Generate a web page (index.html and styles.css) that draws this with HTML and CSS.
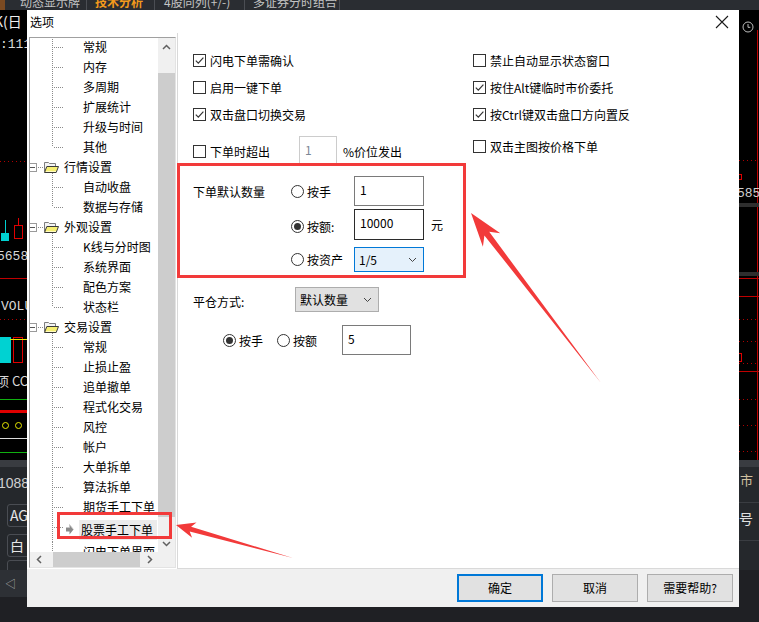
FILE: index.html
```html
<!DOCTYPE html>
<html lang="zh-CN">
<head>
<meta charset="utf-8">
<title>选项</title>
<link rel="stylesheet" href="styles.css">
</head>
<body>
<div class="screen">
  <div class="tabbar">
    <span class="tab stub"></span>
    <span class="tab t1">动态显示牌</span>
    <span class="tab t2 active">技术分析</span>
    <span class="tab t3">4股同列(+/-)</span>
    <span class="tab t4">多证券分时组合</span>
  </div>

  <div class="chart-l">
    <span class="ct k-lbl">K(日</span>
    <span class="ct n111">:111</span>
    <i class="dot-red" style="top:151px"></i>
    <i class="wick cy" style="left:5px;top:210px;height:14px"></i>
    <i class="cbody cyan" style="left:1px;top:223px;width:8px;height:8px"></i>
    <i class="wick rd" style="left:18px;top:208px;height:8px"></i>
    <i class="cbody hollow" style="left:14px;top:215px;width:9px;height:14px"></i>
    <span class="ct n5658">5658</span>
    <i class="line-red" style="top:268px"></i>
    <span class="ct volu">VOLU</span>
    <i class="dot-red" style="top:309px"></i>
    <i class="cbody cyan" style="left:0;top:327px;width:11px;height:26px"></i>
    <i class="cbody hollow" style="left:13px;top:327px;width:10px;height:26px"></i>
    <i class="line-yel" style="top:329px"></i>
    <span class="ct cc">项 CC</span>
    <i class="line-grn" style="top:389px"></i>
    <i class="line-red thick" style="top:400px"></i>
    <i class="ring" style="left:2px;top:412px"></i>
    <i class="ring" style="left:15px;top:412px"></i>
    <i class="line-wht" style="top:428px"></i>
    <i class="line-grn" style="top:442px"></i>
  </div>

  <div class="band"></div>

  <div class="lower-l">
    <span class="ct n10889">10889</span>
    <span class="pill" style="top:37px">AG</span>
    <span class="pill" style="top:67px">白</span>
    <span class="pill" style="top:93px"></span>
  </div>
  <div class="foot-l"><span class="tri">◁</span></div>

  <div class="chart-r">
    <svg class="clock" width="12" height="12" viewBox="0 0 12 12"><circle cx="6" cy="6" r="5" fill="none" stroke="#bdbdbd" stroke-width="1"/><path d="M6 3v3.3h2.3" fill="none" stroke="#bdbdbd" stroke-width="1"/></svg>
    <i class="vred"></i>
    <i class="dot-red r" style="top:150px"></i>
    <i class="mark-r" style="top:164px"></i>
    <span class="ct n585">585</span>
    <i class="gband" style="top:193px"></i>
    <i class="gband" style="top:262px"></i>
    <i class="line-red r" style="top:268px"></i>
    <i class="line-red r" style="top:286px"></i>
    <i class="dot-red r" style="top:309px"></i>
    <i class="dot-red r" style="top:331px"></i>
    <i class="mark-r" style="top:343px;height:9px"></i>
    <i class="dot-red r" style="top:353px"></i>
    <i class="line-red r" style="top:361px"></i>
    <i class="dot-red r" style="top:389px"></i>
    <i class="dot-red r" style="top:415px"></i>
    <i class="dot-red r" style="top:441px"></i>
  </div>
  <div class="lower-r">
    <span class="ct shi">市</span>
    <i class="sep" style="top:35px"></i>
    <span class="ct hao">号</span>
    <i class="sep" style="top:73px"></i>
  </div>

  <div class="dialog">
    <div class="titlebar">
      <span class="title">选项</span>
      <svg class="close" width="14" height="14" viewBox="0 0 14 14"><path d="M1 1L13 13M13 1L1 13" stroke="#1a1a1a" stroke-width="1.1"/></svg>
    </div>
    <div class="body">
      <div class="nav">
        <div class="tree">
          <div class="items">
            <div class="list">
              <div class="node child">常规</div>
              <div class="node child">内存</div>
              <div class="node child">多周期</div>
              <div class="node child">扩展统计</div>
              <div class="node child">升级与时间</div>
              <div class="node child last">其他</div>
              <div class="node parent"><span class="minus"></span><span class="hdots"></span><svg class="folder" width="16" height="14" viewBox="0 0 16 14"><path d="M1.5 11.5V2.5h4l1 1h6v3" fill="#f4f4f4" stroke="#7c7c7c"/><path d="M1.5 12.5L3.8 6.5H15.5L13.2 12.5Z" fill="#f6ef72" stroke="#3a3a3a"/><path d="M3 11.5h10" stroke="#fffbc0"/></svg><span class="ptext">行情设置</span></div>
              <div class="node child">自动收盘</div>
              <div class="node child last">数据与存储</div>
              <div class="node parent"><span class="minus"></span><span class="hdots"></span><svg class="folder" width="16" height="14" viewBox="0 0 16 14"><path d="M1.5 11.5V2.5h4l1 1h6v3" fill="#f4f4f4" stroke="#7c7c7c"/><path d="M1.5 12.5L3.8 6.5H15.5L13.2 12.5Z" fill="#f6ef72" stroke="#3a3a3a"/><path d="M3 11.5h10" stroke="#fffbc0"/></svg><span class="ptext">外观设置</span></div>
              <div class="node child">K线与分时图</div>
              <div class="node child">系统界面</div>
              <div class="node child">配色方案</div>
              <div class="node child last">状态栏</div>
              <div class="node parent"><span class="minus"></span><span class="hdots"></span><svg class="folder" width="16" height="14" viewBox="0 0 16 14"><path d="M1.5 11.5V2.5h4l1 1h6v3" fill="#f4f4f4" stroke="#7c7c7c"/><path d="M1.5 12.5L3.8 6.5H15.5L13.2 12.5Z" fill="#f6ef72" stroke="#3a3a3a"/><path d="M3 11.5h10" stroke="#fffbc0"/></svg><span class="ptext">交易设置</span></div>
              <div class="node child">常规</div>
              <div class="node child">止损止盈</div>
              <div class="node child">追单撤单</div>
              <div class="node child">程式化交易</div>
              <div class="node child">风控</div>
              <div class="node child">帐户</div>
              <div class="node child">大单拆单</div>
              <div class="node child">算法拆单</div>
              <div class="node child">期货手工下单</div>
              <div class="node child sel"><svg class="selarrow" width="8" height="11" viewBox="0 0 8 11"><path d="M0 3.5H3.5V0.5L7.5 5.5L3.5 10.5V7.5H0Z" fill="#8a8a8a"/><path d="M0 3.5H3.5V0.5L7.5 5.5" fill="none" stroke="#c8c8c8" stroke-width="0.8"/></svg><span class="seltext">股票手工下单</span></div>
              <div class="node child">闪电下单界面</div>
            </div>
          </div>
          <div class="vscroll">
            <span class="sbtn"><svg width="9" height="6" viewBox="0 0 9 6"><path d="M1 5L4.5 1.5L8 5" fill="none" stroke="#606060" stroke-width="1.5"/></svg></span>
            <span class="vtrack"><span class="vthumb"></span></span>
            <span class="sbtn"><svg width="9" height="6" viewBox="0 0 9 6"><path d="M1 1L4.5 4.5L8 1" fill="none" stroke="#606060" stroke-width="1.5"/></svg></span>
          </div>
          <div class="hscroll">
            <span class="sbtn h"><svg width="6" height="9" viewBox="0 0 6 9"><path d="M5 1L1.5 4.5L5 8" fill="none" stroke="#606060" stroke-width="1.5"/></svg></span>
            <span class="htrack"><span class="hthumb"></span></span>
            <span class="sbtn h"><svg width="6" height="9" viewBox="0 0 6 9"><path d="M1 1L4.5 4.5L1 8" fill="none" stroke="#606060" stroke-width="1.5"/></svg></span>
          </div>
          <div class="corner"></div>
        </div>
      </div>

      <div class="panel">
        <div class="opts">
          <label class="chk"><span class="box"><svg width="11" height="11" viewBox="0 0 11 11"><path d="M1.8 5.6L4.3 8.1L9.4 2.6" fill="none" stroke="#333" stroke-width="1.2"/></svg></span>闪电下单需确认</label>
          <label class="chk"><span class="box"></span>禁止自动显示状态窗口</label>
          <label class="chk"><span class="box"></span>启用一键下单</label>
          <label class="chk"><span class="box"><svg width="11" height="11" viewBox="0 0 11 11"><path d="M1.8 5.6L4.3 8.1L9.4 2.6" fill="none" stroke="#333" stroke-width="1.2"/></svg></span>按住Alt键临时市价委托</label>
          <label class="chk"><span class="box"><svg width="11" height="11" viewBox="0 0 11 11"><path d="M1.8 5.6L4.3 8.1L9.4 2.6" fill="none" stroke="#333" stroke-width="1.2"/></svg></span>双击盘口切换交易</label>
          <label class="chk"><span class="box"><svg width="11" height="11" viewBox="0 0 11 11"><path d="M1.8 5.6L4.3 8.1L9.4 2.6" fill="none" stroke="#333" stroke-width="1.2"/></svg></span>按Ctrl键双击盘口方向置反</label>
        </div>
        <div class="row4">
          <div class="over">
            <label class="chk"><span class="box"></span>下单时超出</label>
            <span class="field dis">1</span>
            <span class="pct">%价位发出</span>
          </div>
          <label class="chk top"><span class="box"></span>双击主图按价格下单</label>
        </div>

        <div class="qty">
          <span class="qlabel">下单默认数量</span>
          <label class="rcell r1"><span class="rad"></span>按手</label>
          <span class="field fa">1</span>
          <label class="rcell r2"><span class="rad on"></span>按额:</label>
          <span class="field fb">10000</span>
          <span class="unit">元</span>
          <label class="rcell r3"><span class="rad"></span>按资产</label>
          <span class="sel sel-blue">1/5<svg width="9" height="6" viewBox="0 0 9 6"><path d="M1 1L4.5 4.5L8 1" fill="none" stroke="#444" stroke-width="1"/></svg></span>
        </div>

        <div class="close-mode">
          <span class="cm-label">平仓方式:</span>
          <span class="sel sel-grey">默认数量<svg width="9" height="6" viewBox="0 0 9 6"><path d="M1 1L4.5 4.5L8 1" fill="none" stroke="#444" stroke-width="1"/></svg></span>
        </div>

        <div class="cm-radios">
          <label class="rl"><span class="rad on"></span>按手</label>
          <label class="rl second"><span class="rad"></span>按额</label>
          <span class="field fc">5</span>
        </div>
      </div>
    </div>
    <div class="footer">
      <span class="btn default">确定</span>
      <span class="btn">取消</span>
      <span class="btn">需要帮助?</span>
    </div>
  </div>

  <svg class="annot" width="759" height="622" viewBox="0 0 759 622">
    <rect x="178.5" y="164.5" width="286" height="112" fill="none" stroke="#f23a3a" stroke-width="3"/>
    <rect x="58.5" y="513.5" width="112" height="24" fill="none" stroke="#f23a3a" stroke-width="3"/>
    <polygon points="601,383 489.2,231.8 500.3,233.3 471,213 482.9,246.7 484.4,235.4" fill="#f23a3a"/>
    <polygon points="293,558 191.1,526.7 196.5,522.4 176,525 192.1,537.8 189.7,531.5" fill="#f23a3a"/>
  </svg>
</div>
</body>
</html>
```

FILE: styles.css
```css
* { box-sizing: border-box; }
html, body { margin: 0; padding: 0; }
body {
  background: #1f2024;
  font-family: "Noto Sans CJK SC", "Noto Sans", sans-serif;
  font-size: 12px;
  color: #000;
  overflow: hidden;
}
.screen {
  position: relative;
  width: 759px;
  height: 622px;
  overflow: hidden;
  background: #1f2024;
}

/* ---------- background application ---------- */
.tabbar {
  position: absolute; left: 0; top: 0;
  width: 759px; height: 10px;
  background: #2a2d32;
  display: flex;
  overflow: hidden;
  color: #c4c4c4;
}
.tab {
  line-height: 12px;
  margin-top: -4px;
  height: 20px;
  white-space: nowrap;
  border-right: 1px solid #4b4e54;
}
.stub { width: 5px; background: #7a4a22; border: none; }
.t1 { width: 82px; padding-left: 15px; }
.t2 { width: 68px; padding-left: 8px; }
.t3 { width: 90px; padding-left: 9px; }
.t4 { width: 95px; padding-left: 8px; }
.active { color: #f39a1c; font-weight: bold; }

.chart-l {
  position: absolute; left: 0; top: 10px;
  width: 27px; height: 450px;
  background: #000;
  overflow: hidden;
}
.chart-l i, .chart-r i, .lower-r i { position: absolute; display: block; }
.ct {
  position: absolute;
  font-family: "Liberation Mono", monospace;
  font-size: 13px;
  line-height: 14px;
  color: #d8d8d8;
  white-space: nowrap;
}
.k-lbl { left: -6px; top: 3px; font-family: "Noto Sans CJK SC", sans-serif; font-size: 14px; line-height: 16px; color: #eee; }
.n111 { left: 0; top: 28px; }
.n5658 { left: -3px; top: 240px; }
.volu { left: 1px; top: 290px; }
.cc { left: -4px; top: 364px; font-family: "Noto Sans CJK SC", sans-serif; }
.dot-red {
  left: 0; width: 27px; height: 1px;
  background: repeating-linear-gradient(to right, #b00000 0 1px, transparent 1px 4px);
}
.line-red { left: 0; width: 27px; height: 1px; background: #c00000; }
.line-red.thick { height: 3px; background: #e00000; }
.line-grn { left: 0; width: 27px; height: 1px; background: #10b010; }
.line-wht { left: 0; width: 27px; height: 1px; background: #dcdcdc; }
.line-yel { left: 10px; width: 17px; height: 1px; background: #e8e800; }
.wick { width: 1px; }
.wick.cy { background: #00d0d0; }
.wick.rd { background: #e00000; }
.cbody.cyan { background: #00d2d2; }
.cbody.hollow { border: 1px solid #e00000; }
.ring { width: 7px; height: 7px; border: 1px solid #e8e800; border-radius: 50%; }

.band {
  position: absolute; left: 0; top: 460px;
  width: 759px; height: 7px;
  background: #393c41;
}
.lower-l {
  position: absolute; left: 0; top: 467px;
  width: 27px; height: 103px;
  background: #25282c;
  overflow: hidden;
}
.n10889 { left: -2px; top: 9px; font-family: "Liberation Sans", sans-serif; font-size: 14px; color: #cfcfcf; }
.pill {
  position: absolute; left: 7px;
  width: 40px; height: 23px;
  border: 1px solid #4a4d53;
  border-radius: 3px;
  color: #e6e6e6;
  font-size: 14px;
  line-height: 21px;
  padding-left: 2px;
  white-space: nowrap;
}
.foot-l {
  position: absolute; left: 0; top: 570px;
  width: 27px; height: 27px;
  background: #2d3035;
  color: #a8a8a8;
}
.tri { position: absolute; left: 5px; top: 6px; font-size: 11px; line-height: 14px; }

.chart-r {
  position: absolute; left: 739px; top: 10px;
  width: 20px; height: 450px;
  background: #000;
  overflow: hidden;
}
.clock { position: absolute; left: 3px; top: 11px; }
.vred { left: 18px; top: 20px; width: 1px; height: 430px; background: #c00000; }
.dot-red.r, .line-red.r { width: 20px; }
.mark-r { left: 0; width: 3px; height: 6px; border: 1px solid #e00000; border-left: none; }
.n585 { left: -2px; top: 177px; color: #cfcfcf; }
.gband { left: 0; width: 20px; height: 4px; background: #2e2e2e; }
.lower-r {
  position: absolute; left: 739px; top: 467px;
  width: 20px; height: 103px;
  background: #25282c;
  overflow: hidden;
}
.shi { left: 1px; top: 6px; font-family: "Noto Sans CJK SC", sans-serif; color: #d0c0a0; }
.hao { left: 0; top: 44px; font-family: "Noto Sans CJK SC", sans-serif; font-size: 14px; color: #e0e0e0; }
.sep { left: 0; width: 20px; height: 1px; background: #3a3d42; }

/* ---------- dialog ---------- */
.dialog {
  position: absolute; left: 27px; top: 10px;
  width: 712px; height: 597px;
  background: #fff;
  display: flex;
  flex-direction: column;
}
.titlebar {
  height: 23px;
  flex: none;
  display: flex;
  align-items: center;
  padding-left: 3px;
}
.title { line-height: 16px; }
.close { margin-left: auto; margin-right: 10px; display: block; }

.body { flex: 1; display: flex; min-height: 0; }

.nav { width: 150px; flex: none; padding: 4px 1px 0 2px; }
.tree {
  height: 531px;
  border: 1px solid;
  border-color: #a0a0a0 #e3e3e3 #e3e3e3 #a0a0a0;
  display: grid;
  grid-template-columns: 128px 17px;
  grid-template-rows: 514px 15px;
  background: #fff;
}
.items { overflow: hidden; position: relative; }
.list { margin-top: -1px; }
.node {
  height: 20px;
  position: relative;
  display: flex;
  align-items: center;
  white-space: nowrap;
  line-height: 16px;
}
.child { padding-left: 53px; }
.child::before {
  content: "";
  position: absolute;
  left: 22px; top: 0; bottom: 0;
  width: 1px;
  background: repeating-linear-gradient(to bottom, #8a8a8a 0 1px, transparent 1px 2px);
}
.child.last::before { bottom: 10px; }
.child::after {
  content: "";
  position: absolute;
  left: 24px; top: 10px;
  width: 9px; height: 1px;
  background: repeating-linear-gradient(to right, #8a8a8a 0 1px, transparent 1px 2px);
}
.parent::before {
  content: "";
  position: absolute;
  left: 22px; top: 16px; bottom: 0;
  width: 1px;
  background: repeating-linear-gradient(to bottom, #8a8a8a 0 1px, transparent 1px 2px);
}
.minus {
  width: 9px; height: 9px;
  margin-left: -2px;
  border: 1px solid #9a9a9a;
  background: #fff;
  position: relative;
  flex: none;
}
.minus::after {
  content: "";
  position: absolute;
  left: 1px; top: 3px;
  width: 5px; height: 1px;
  background: #555;
}
.hdots {
  width: 6px; height: 1px;
  flex: none;
  background: repeating-linear-gradient(to right, transparent 0 1px, #8a8a8a 1px 2px);
}
.folder { display: block; flex: none; }
.ptext { margin-left: 5px; }
.child.sel { padding-left: 36px; }
.selarrow { display: block; flex: none; margin-right: 7px; position: relative; z-index: 1; }
.seltext { margin-left: -2px; padding: 0 4px 0 2px; height: 20px; line-height: 20px; background: #ebebeb; }

.vscroll {
  background: #f0f0f0;
  display: flex;
  flex-direction: column;
}
.sbtn {
  width: 17px; height: 17px;
  flex: none;
  display: flex;
  align-items: center;
  justify-content: center;
}
.sbtn.h { height: 15px; }
.sbtn svg { display: block; }
.vtrack { flex: 1; }
.vthumb { display: block; margin-top: 18px; height: 444px; background: #cdcdcd; }
.hscroll {
  background: #f0f0f0;
  display: flex;
}
.htrack { flex: 1; display: flex; align-items: stretch; }
.hthumb { display: block; margin-left: 6px; width: 87px; background: #cdcdcd; }
.corner { background: #f0f0f0; }

.panel {
  flex: 1;
  border-left: 1px solid #d9d9d9;
  border-bottom: 1px solid #d9d9d9;
  padding: 14px 0 0 15px;
}
.opts {
  display: grid;
  grid-template-columns: 280px 1fr;
  grid-template-rows: 27px 27px 27px;
}
.chk {
  display: flex;
  align-items: center;
  gap: 4px;
  line-height: 17px;
  white-space: nowrap;
}
.box {
  width: 13px; height: 13px;
  border: 1px solid #333;
  background: #fff;
  flex: none;
  display: block;
}
.box svg { display: block; }
.row4 {
  display: grid;
  grid-template-columns: 280px 1fr;
  margin-top: 8px;
}
.over { display: flex; align-items: center; height: 30px; }
.chk.top { align-self: start; padding-top: 2px; }
.field {
  display: block;
  background: #fff;
  border: 1px solid #7a7a7a;
  padding: 4px 0 0 5px;
  line-height: 17px;
  white-space: nowrap;
}
.field.dis {
  width: 38px; height: 30px;
  margin-left: 29px;
  border-color: #cccccc;
  color: #7b8796;
}
.pct { margin-left: 6px; line-height: 17px; }

.qty {
  display: grid;
  grid-template-columns: 98px 63px 70px auto;
  grid-template-rows: 30px 34px 32px;
  margin-top: 10px;
}
.qlabel {
  grid-row: 1; grid-column: 1;
  align-self: end;
  height: 30px;
  display: flex;
  align-items: center;
}
.rcell {
  grid-column: 2;
  align-self: end;
  display: flex;
  align-items: center;
  gap: 3px;
  white-space: nowrap;
}
.r1 { grid-row: 1; height: 30px; }
.r2 { grid-row: 2; height: 28px; }
.r3 { grid-row: 3; height: 25px; }
.fa { grid-row: 1; grid-column: 3; align-self: end; height: 30px; }
.fb { grid-row: 2; grid-column: 3; align-self: end; height: 31px; border-color: #2b2b2b; }
.unit {
  grid-row: 2; grid-column: 4;
  align-self: end;
  height: 31px;
  display: flex;
  align-items: center;
  padding-left: 7px;
}
.sel {
  display: flex;
  align-items: center;
  justify-content: space-between;
  height: 25px;
  padding: 0 6px 0 4px;
  white-space: nowrap;
}
.sel svg { display: block; }
.sel-blue {
  grid-row: 3; grid-column: 3;
  align-self: end;
  border: 1px solid #0078d7;
  background: #e5f1fb;
}
.rad {
  width: 13px; height: 13px;
  border: 1px solid #333;
  border-radius: 50%;
  background: #fff;
  flex: none;
  display: flex;
  align-items: center;
  justify-content: center;
}
.rad.on::after {
  content: "";
  width: 7px; height: 7px;
  border-radius: 50%;
  background: #333;
}

.close-mode { display: flex; align-items: flex-start; margin-top: 15px; }
.cm-label { width: 102px; margin-top: 6px; line-height: 17px; }
.sel-grey {
  width: 84px;
  background: #e1e1e1;
  border: 1px solid #adadad;
}
.cm-radios {
  display: flex;
  align-items: center;
  height: 30px;
  margin-top: 13px;
  padding-left: 30px;
}
.rl { display: flex; align-items: center; gap: 3px; white-space: nowrap; line-height: 17px; }
.rl.second { margin-left: 14px; }
.fc { width: 69px; height: 30px; margin-left: 25px; }

.footer {
  height: 38px;
  flex: none;
  background: #f0f0f0;
  display: flex;
  justify-content: flex-end;
  align-items: flex-start;
  gap: 9px;
  padding: 5px 6px 0 0;
}
.btn {
  width: 86px; height: 28px;
  background: #e1e1e1;
  border: 1px solid #adadad;
  display: flex;
  align-items: center;
  justify-content: center;
  line-height: 16px;
}
.btn.default { border: 2px solid #0078d7; }

.annot {
  position: absolute; left: 0; top: 0;
  pointer-events: none;
}
```
